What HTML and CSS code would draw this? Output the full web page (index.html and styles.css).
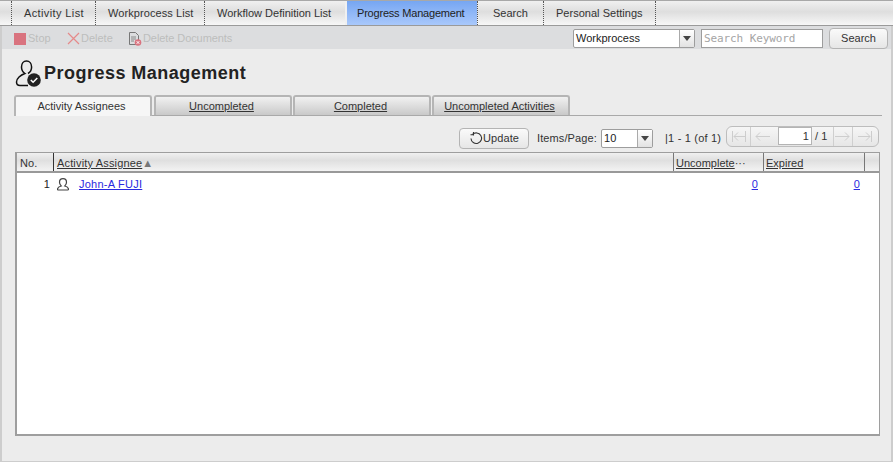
FILE: index.html
```html
<!DOCTYPE html>
<html lang="en">
<head>
<meta charset="utf-8">
<title>Progress Management</title>
<link rel="stylesheet" href="styles.css">
</head>
<body>
<div class="frame">
  <nav class="nav">
    <a class="nav-item">Activity List</a>
    <a class="nav-item">Workprocess List</a>
    <a class="nav-item">Workflow Definition List</a>
    <a class="nav-item active">Progress Management</a>
    <a class="nav-item">Search</a>
    <a class="nav-item">Personal Settings</a>
  </nav>
  <div class="toolbar">
    <span class="tool tool-stop"><svg width="12" height="12" viewBox="0 0 12 12"><rect width="12" height="12" fill="#d9737f"/></svg>Stop</span>
    <span class="tool tool-delete"><svg width="13" height="13" viewBox="0 0 13 13"><path d="M1 1l11 11M12 1L1 12" stroke="#e58a8a" stroke-width="1.2" fill="none"/></svg>Delete</span>
    <span class="tool tool-docs"><svg width="14" height="14" viewBox="0 0 14 14"><path d="M1.5.5h6l3 3v9h-9z" fill="none" stroke="#777"/><path d="M3 5h5M3 7h5M3 9h3" stroke="#888"/><circle cx="10" cy="10.5" r="3.3" fill="#d9737f"/><path d="M8.7 9.2l2.6 2.6M11.3 9.2l-2.6 2.6" stroke="#fff"/></svg>Delete Documents</span>
    <div class="search">
      <div class="select select-kind"><span class="select-value">Workprocess</span><span class="select-arrow"></span></div>
      <input class="keyword" type="text" placeholder="Search Keyword">
      <button class="btn btn-search" type="button">Search</button>
    </div>
  </div>
  <main class="main">
    <h1 class="title">
      <svg class="title-icon" width="26" height="27" viewBox="0 0 26 27"><path d="M13 13.5c2.6-1.6 3.6-4 3.6-6.5C16.600 3.500 14.500 1 11.500 1S6.500 3.500 6.500 7c0 2.500 1 4.900 3.400 6.500C5.500 15 1.500 18.500 1.500 22c0 2 1.500 3.500 3.500 3.500h8" fill="none" stroke="#111" stroke-width="1.5"/><circle cx="19" cy="20" r="6.800" fill="#222"/><path d="M15.800 20l2.300 2.300 4.200-4.300" fill="none" stroke="#fff" stroke-width="1.500"/></svg>
      Progress Management
    </h1>
    <div class="tabs">
      <span class="tab current">Activity Assignees</span>
      <a class="tab">Uncompleted</a>
      <a class="tab">Completed</a>
      <a class="tab">Uncompleted Activities</a>
    </div>
    <div class="controls">
      <button class="btn btn-update" type="button"><svg width="14" height="14" viewBox="0 0 14 14"><path d="M3.500 3.500A5.300 5.300 0 1 1 2 7.500" fill="none" stroke="#333" stroke-width="1.100"/><path d="M1.500 3.800h3.500M4.500 1v3.500" fill="none" stroke="#333" stroke-width="1.100"/></svg>Update</button>
      <span class="items-label">Items/Page:</span>
      <div class="select select-items"><span class="select-value">10</span><span class="select-arrow"></span></div>
      <span class="range">|1 - 1 (of 1)</span>
      <div class="pager">
        <span class="pg"><svg width="16" height="11" viewBox="0 0 16 11"><path d="M1.500 0v11M14.500 0v11M14 5.500H3M7 1.500L3 5.500l4 4" fill="none" stroke="#cdcdcd"/></svg></span>
        <span class="pg pg-prev"><svg width="16" height="11" viewBox="0 0 16 11"><path d="M16 5.500H2M6 1.500L2 5.500l4 4" fill="none" stroke="#cdcdcd"/></svg></span>
        <span class="pg-input">1</span>
        <span class="pg-total">/ 1</span>
        <span class="pg pg-next"><svg width="16" height="11" viewBox="0 0 16 11"><path d="M0 5.500h14M10 1.500l4 4-4 4" fill="none" stroke="#cdcdcd"/></svg></span>
        <span class="pg pg-last"><svg width="16" height="11" viewBox="0 0 16 11"><path d="M14.500 0v11M1 5.500h12M9 1.500l4 4-4 4" fill="none" stroke="#cdcdcd"/></svg></span>
      </div>
    </div>
    <div class="grid">
      <div class="row head">
        <span class="c-no">No.</span>
        <span class="c-name"><u>Activity Assignee</u><i class="sort">▲</i></span>
        <span class="c-unc"><u>Uncomplete</u>···</span>
        <span class="c-exp"><u>Expired</u></span>
        <span class="c-end"></span>
      </div>
      <div class="row body">
        <span class="c-no num">1</span>
        <span class="c-name user"><svg width="12" height="13" viewBox="0 0 12 13"><path d="M4.200 8c-1-1-1.700-2.200-1.700-3.800C2.500 2.200 4 .7 6 .7s3.500 1.500 3.500 3.500c0 1.600-.7 2.800-1.700 3.800 1.800.5 3.700 1.600 3.700 3.200 0 .5-.4.800-.8.800H1.300c-.4 0-.8-.3-.8-.8C.5 9.600 2.400 8.500 4.200 8z" fill="none" stroke="#444" stroke-width="1.200"/></svg><a class="link">John-A FUJI</a></span>
        <span class="c-unc num"><a class="link">0</a></span>
        <span class="c-exp num"><a class="link">0</a></span>
      </div>
    </div>
  </main>
</div>
</body>
</html>
```
FILE: styles.css
```css
* { box-sizing: border-box; }
html, body { margin: 0; height: 100%; }
body {
  font: 11px/13px "Liberation Sans", Arial, sans-serif;
  letter-spacing: .1px;
  color: #333;
  background: #ececec;
  overflow: hidden;
}
.frame {
  width: 893px;
  height: 462px;
  border: solid #cdcdcd;
  border-width: 0 2px 1px 2px;
  display: flex;
  flex-direction: column;
}
.nav {
  height: 26px;
  flex: none;
  display: flex;
  padding-left: 11px;
  border-top: 1px solid #a8a8a8;
  border-bottom: 1px solid #9a9a9a;
  background: linear-gradient(#f0f0f0 0, #dedede 45%, #f7f7f7 100%);
  margin: 0 -2px;
}
.nav-item {
  height: 24px;
  line-height: 24px;
  padding: 0 12px;
  border-left: 1px dotted #555;
  white-space: nowrap;
  color: #333;
  letter-spacing: 0;
}
.nav-item:nth-child(1) { width: 84px; padding-left: 12px; letter-spacing: .38px; }
.nav-item:nth-child(2) { width: 109px; letter-spacing: .08px; }
.nav-item:nth-child(3) { width: 141px; letter-spacing: 0; }
.nav-item:nth-child(4) { width: 132px; padding-left: 10px; border-left: 2px solid #f0f0f0; letter-spacing: -.2px; }
.nav-item:nth-child(5) { width: 66px; padding-left: 15px; }
.nav-item:nth-child(6) { width: 113px; padding-left: 12px; border-right: 1px dotted #555; letter-spacing: .02px; }
.nav-item.active {
  background: linear-gradient(#76a6f2, #a9c8fb);
  color: #222;
}
.toolbar {
  height: 23px;
  flex: none;
  display: flex;
  align-items: center;
  padding: 2px 0 0 12px;
  background: #dcdddf;
  color: #bdbdbd;
  letter-spacing: 0;
}
.tool { display: flex; align-items: center; }
.tool-stop { gap: 2px; width: 53px; }
.tool-delete { gap: 1px; width: 61px; }
.tool-docs { gap: 1px; letter-spacing: -.08px; }
.search {
  margin-left: auto;
  margin-right: 3px;
  display: flex;
  align-items: center;
  color: #222;
}
.select {
  display: flex;
  background: #fff;
  border: 1px solid #9d9d9d;
  border-radius: 2px;
  height: 19px;
  align-items: center;
}
.select-value { flex: 1; padding-left: 2px; color: #222; }
.select-arrow {
  width: 15px;
  height: 17px;
  flex: none;
  border-left: 1px solid #aaa;
  background: linear-gradient(#fff, #e2e2e2);
  position: relative;
}
.select-arrow::after {
  content: "";
  position: absolute;
  left: 3px;
  top: 6px;
  border: solid transparent;
  border-width: 5px 4px 0;
  border-top-color: #444;
}
.select-kind { width: 122px; }
.keyword {
  width: 122px;
  height: 19px;
  margin-left: 6px;
  padding: 0 2px;
  border: 1px solid #9d9d9d;
  background: #fff;
  font: 11px "DejaVu Sans Mono", monospace;
  letter-spacing: -.1px;
}
.keyword::placeholder { color: #a5a5a5; opacity: 1; }
.btn {
  height: 21px;
  padding: 0;
  display: inline-flex;
  align-items: center;
  justify-content: center;
  border: 1px solid #b4b4b4;
  border-radius: 4px;
  background: linear-gradient(#fafafa, #e6e6e6);
  font: inherit;
  letter-spacing: inherit;
  color: #333;
}
.btn-search { width: 59px; margin-left: 6px; }
.main { flex: 1; display: flex; flex-direction: column; padding: 0 9px 0 12px; min-height: 0; }
.title {
  margin: 0;
  height: 46px;
  flex: none;
  display: flex;
  align-items: flex-end;
  gap: 3px;
  padding: 0 0 8px 1px;
  font-size: 18px;
  line-height: 27px;
  font-weight: 700;
  letter-spacing: .48px;
  color: #222;
}
.tabs {
  height: 21px;
  flex: none;
  display: flex;
  gap: 1px;
  border-bottom: 1px solid #a9a9a9;
}
.tab {
  width: 138px;
  height: 20px;
  padding-right: 3px;
  line-height: 19px;
  letter-spacing: 0;
  text-align: center;
  border: 2px solid #b5b5b5;
  border-bottom: 0;
  border-radius: 3px 3px 0 0;
  background: linear-gradient(#f1f1f1, #c9c9c9);
  text-decoration: underline;
  color: #333;
}
.tab.current {
  height: 21px;
  background: #f6f6f6;
  text-decoration: none;
  margin-right: 1px;
}
.controls {
  height: 36px;
  flex: none;
  display: flex;
  align-items: center;
  padding-left: 445px;
  padding-top: 8px;
}
.btn-update { width: 70px; gap: 0; }
.items-label { margin-left: 8px; width: 64px; white-space: nowrap; }
.select-items { width: 52px; }
.range { margin-left: 12px; white-space: nowrap; width: 61px; letter-spacing: .2px; }
.pager {
  width: 153px;
  height: 21px;
  display: flex;
  align-items: center;
  margin-top: -4px;
  border: 1px solid #bdbdbd;
  border-radius: 6px;
  background: linear-gradient(#f6f6f6, #e6e6e6);
}
.pg {
  width: 24px;
  height: 19px;
  flex: none;
  display: flex;
  align-items: center;
  justify-content: center;
  border-right: 1px solid #cfcfcf;
}
.pg-prev { width: 22px; border: 0; }
.pg-next { width: 20px; border-left: 1px solid #cfcfcf; }
.pg-last { width: 24px; border: 0; }
.pg-input {
  width: 34px;
  height: 18px;
  margin-left: 5px;
  padding-right: 2px;
  line-height: 16px;
  text-align: right;
  background: #fff;
  border: 1px solid #b4b4b4;
}
.pg-total { width: 21px; padding-left: 3px; }
.grid {
  width: 865px;
  flex: none;
  height: 284px;
  background: #fff;
  border: 2px solid #9e9e9e;
  border-width: 1px 1px 2px 2px;
  margin-left: 1px;
}
.row { display: flex; }
.head {
  height: 20px;
  line-height: 20px;
  background: linear-gradient(#f0f0f0, #dfdfdf 40%, #f3f3f3);
  border-bottom: 2px solid #999;
}
.head span { padding-left: 3px; height: 18px; white-space: nowrap; }
.head .c-name { letter-spacing: .16px; }
.head .c-unc, .head .c-exp { padding-left: 2px; letter-spacing: 0; }
.c-no { width: 36px; flex: none; }
.c-name { width: 620px; flex: none; }
.c-unc { width: 90px; flex: none; }
.c-exp { width: 101px; flex: none; }
.c-end { width: 15px; flex: none; }
.head .c-name { border-left: 1px solid #333; }
.head .c-unc, .head .c-exp, .head .c-end { border-left: 1px solid #777; }
.sort { font-style: normal; color: #777; font-size: 11px; letter-spacing: 0; }
.body { height: 21px; align-items: center; padding-top: 2px; }
.num { text-align: right; }
.body .c-no { padding-right: 3px; color: #222; }
.body .c-unc { padding-right: 5px; }
.body .c-exp { padding-right: 4px; }
.user { display: flex; align-items: center; padding-left: 4px; gap: 10px; }
.link { color: #2a2ae0; text-decoration: underline; letter-spacing: .25px; }
```
